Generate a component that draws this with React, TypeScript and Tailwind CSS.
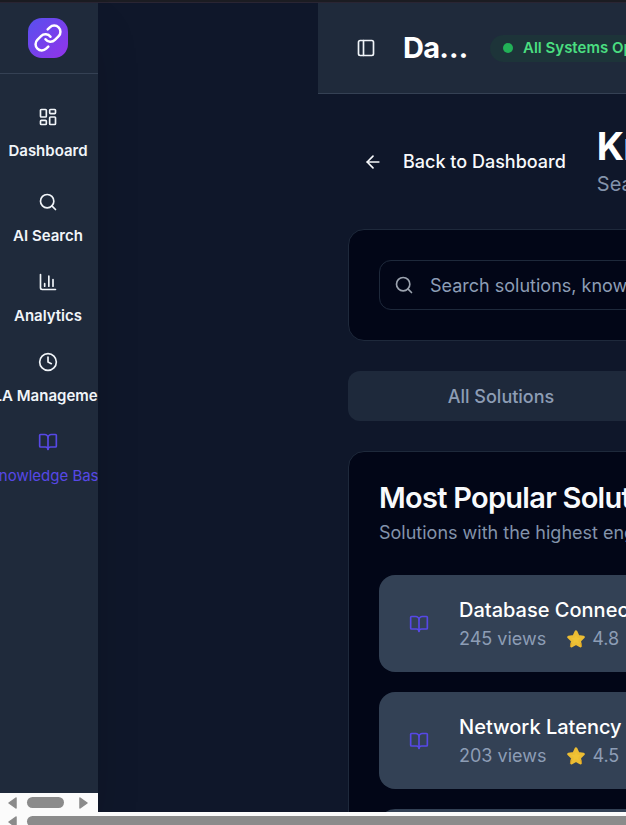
import {
  ArrowLeft,
  BookOpen,
  Clock,
  LayoutDashboard,
  Link as LinkIcon,
  PanelLeft,
  Search,
} from "lucide-react";

const navItems = [
  { label: "Dashboard", icon: LayoutDashboard, active: false },
  { label: "AI Search", icon: Search, active: false },
  { label: "Analytics", icon: BarsIcon, active: false },
  { label: "SLA Management", icon: Clock, active: false },
  { label: "Knowledge Base", icon: BookOpen, active: true },
];

const solutions = [
  { title: "Database Connection Timeout", views: 245, rating: "4.8" },
  { title: "Network Latency Issues", views: 203, rating: "4.5" },
  { title: "Email Server Configuration", views: 189, rating: "4.7" },
];

const tabs = ["All Solutions", "Popular", "Recent", "Categories"];

function BarsIcon({ className }: { className?: string }) {
  return (
    <svg
      viewBox="0 0 24 24"
      fill="none"
      stroke="currentColor"
      strokeWidth="2"
      strokeLinecap="round"
      strokeLinejoin="round"
      className={className}
      aria-hidden="true"
    >
      <path d="M3 3v16a2 2 0 0 0 2 2h16" />
      <path d="M8 17v-3M13 17V5M18 17V9" />
    </svg>
  );
}

function Star() {
  return (
    <svg viewBox="0 0 24 24" className="size-5 shrink-0" aria-hidden="true">
      <path
        d="M12 3.2l2.6 5.7 6.4.8-4.6 4.5 1 6.3-5.4-2.9-5.4 2.9 1-6.3L3 9.7l6.4-.8z"
        fill="#f0c435"
        stroke="#ecbd33"
        strokeWidth="3.2"
        strokeLinejoin="round"
      />
      <path d="M5.2 21.4l.8-4.6M18.8 21.4l-.8-4.6" stroke="#c98f1f" strokeWidth="1" fill="none" />
    </svg>
  );
}

function Arrow({ right = false }: { right?: boolean }) {
  return (
    <svg viewBox="0 0 10 12" className="h-3 w-2.5 shrink-0" aria-hidden="true">
      <path
        d={right ? "M1 1v10l7-5z" : "M8 1v10l-7-5z"}
        fill="#8b8b8b"
        stroke="#8b8b8b"
        strokeWidth="1.5"
        strokeLinejoin="round"
      />
    </svg>
  );
}

function Sidebar() {
  return (
    <aside className="flex w-[98px] shrink-0 flex-col overflow-hidden bg-[#1f2a3b] shadow-2xl">
      <div className="border-b border-[#354154] pt-[15px] pr-0.5 pb-[15px]">
        <div className="mx-auto flex size-10 items-center justify-center rounded-[14px] bg-linear-to-br/srgb from-[#5850ee] to-[#9333ea] text-white">
          <LinkIcon className="size-[30px]" strokeWidth={2} />
        </div>
      </div>
      <nav className="min-h-0 flex-1 overflow-hidden pt-[33px] pr-0.5">
        <ul className="flex flex-col gap-[22px]">
          {navItems.map(({ label, icon: Icon, active }) => (
            <li key={label} className="first:mb-[5px]">
              <a
                href="#"
                className={
                  active
                    ? "flex flex-col items-center gap-2.5 text-[15px] leading-7 whitespace-nowrap text-[#5748e6]"
                    : "flex flex-col items-center gap-2.5 text-[15px] leading-7 font-semibold whitespace-nowrap text-slate-100"
                }
              >
                <Icon className="size-5" />
                <span>{label}</span>
              </a>
            </li>
          ))}
        </ul>
      </nav>
      <div className="flex h-[19px] shrink-0 items-center bg-[#fbfbfb] pl-2">
        <Arrow />
        <span className="ml-[9px] h-[11px] w-[37px] rounded-full bg-[#8b8b8b]" />
        <span className="ml-[15px] flex">
          <Arrow right />
        </span>
      </div>
    </aside>
  );
}

function Header() {
  return (
    <header className="flex h-[91px] items-center border-b border-[#354154] bg-[#1f2a3b] px-[38px]">
      <button type="button" aria-label="Toggle sidebar" className="text-slate-100">
        <PanelLeft className="size-5" />
      </button>
      <h1 className="ml-[27px] w-[72px] truncate text-[29px] leading-10 font-bold tracking-tight text-white">
        Dashboard
      </h1>
      <div className="ml-[15px] flex h-[27px] shrink-0 items-center gap-2.5 rounded-full bg-[#1d3439] px-[13px] text-[15px] font-semibold text-[#4ade80]">
        <span className="size-2.5 rounded-full bg-[#22b157]" />
        All Systems Operational
      </div>
    </header>
  );
}

export default function App() {
  return (
    <div className="flex h-screen flex-col overflow-hidden bg-[#0f172a] font-['Inter','Liberation_Sans',sans-serif]">
      <div className="h-[3px] shrink-0 border-b border-[#2a2533] bg-[#1b1c22]" />
      <div className="flex min-h-0 flex-1">
        <Sidebar />
        <div className="ml-[220px] min-w-0 flex-1 overflow-hidden whitespace-nowrap">
          <div className="min-w-[1254px]">
            <Header />
            <main className="flex flex-col gap-[30px] p-[30px]">
              <div className="flex items-center gap-4">
                <button
                  type="button"
                  className="flex h-[50px] items-center gap-5 px-[15px] text-[18px] font-medium text-slate-50"
                >
                  <ArrowLeft className="size-5" />
                  Back to Dashboard
                </button>
                <div>
                  <h2 className="text-[38px] leading-[45px] font-bold tracking-tight text-white">
                    Knowledge Base
                  </h2>
                  <p className="text-[20px] leading-[30px] text-[#8393ab]">
                    Search and manage solution articles
                  </p>
                </div>
              </div>

              <section className="rounded-2xl border border-[#1e293b] bg-[#020617] p-[30px]">
                <label className="flex h-[50px] items-center gap-4 rounded-xl border border-[#1e293b] px-[14px] text-[#9ca3af]">
                  <Search className="size-5" />
                  <input
                    type="search"
                    aria-label="Search solutions"
                    placeholder="Search solutions, knowledge articles, and guides..."
                    className="min-w-0 flex-1 bg-transparent text-[18px] text-white outline-none placeholder:text-[#8d9db5]"
                  />
                </label>
              </section>

              <div role="tablist" className="grid h-[50px] grid-cols-4 rounded-xl bg-[#1e293b] p-[5px]">
                {tabs.map((tab) => (
                  <button
                    key={tab}
                    type="button"
                    role="tab"
                    className="text-[18px] font-medium text-[#8d9db5]"
                  >
                    {tab}
                  </button>
                ))}
              </div>

              <section className="rounded-2xl border border-[#1e293b] bg-[#020617] p-[30px]">
                <h3 className="text-[29px] leading-8 font-semibold tracking-tight text-slate-50">
                  Most Popular Solutions
                </h3>
                <p className="mt-1.5 text-[18px] leading-[25px] text-[#8393ab]">
                  Solutions with the highest engagement and ratings
                </p>
                <ul className="mt-[30px] flex flex-col gap-5">
                  {solutions.map((s) => (
                    <li
                      key={s.title}
                      className="flex items-center gap-[30px] rounded-2xl bg-[#334155] px-[30px] py-5"
                    >
                      <BookOpen className="size-5 text-[#5748e6]" />
                      <div>
                        <h4 className="text-[20px] leading-[30px] font-medium text-white">
                          {s.title}
                        </h4>
                        <p className="flex items-center gap-5 text-[18px] leading-[27px] text-[#8d9db5]">
                          <span>{s.views} views</span>
                          <span className="flex items-center gap-1.5">
                            <Star />
                            {s.rating}
                          </span>
                        </p>
                      </div>
                    </li>
                  ))}
                </ul>
              </section>
            </main>
          </div>
        </div>
      </div>
      <div className="flex h-[13px] shrink-0 items-start overflow-hidden bg-[#fbfbfb] pt-1 pl-2">
        <Arrow />
        <span className="ml-[9px] h-[11px] flex-1 shrink-0 rounded-l-full bg-[#8b8b8b]" />
      </div>
    </div>
  );
}
